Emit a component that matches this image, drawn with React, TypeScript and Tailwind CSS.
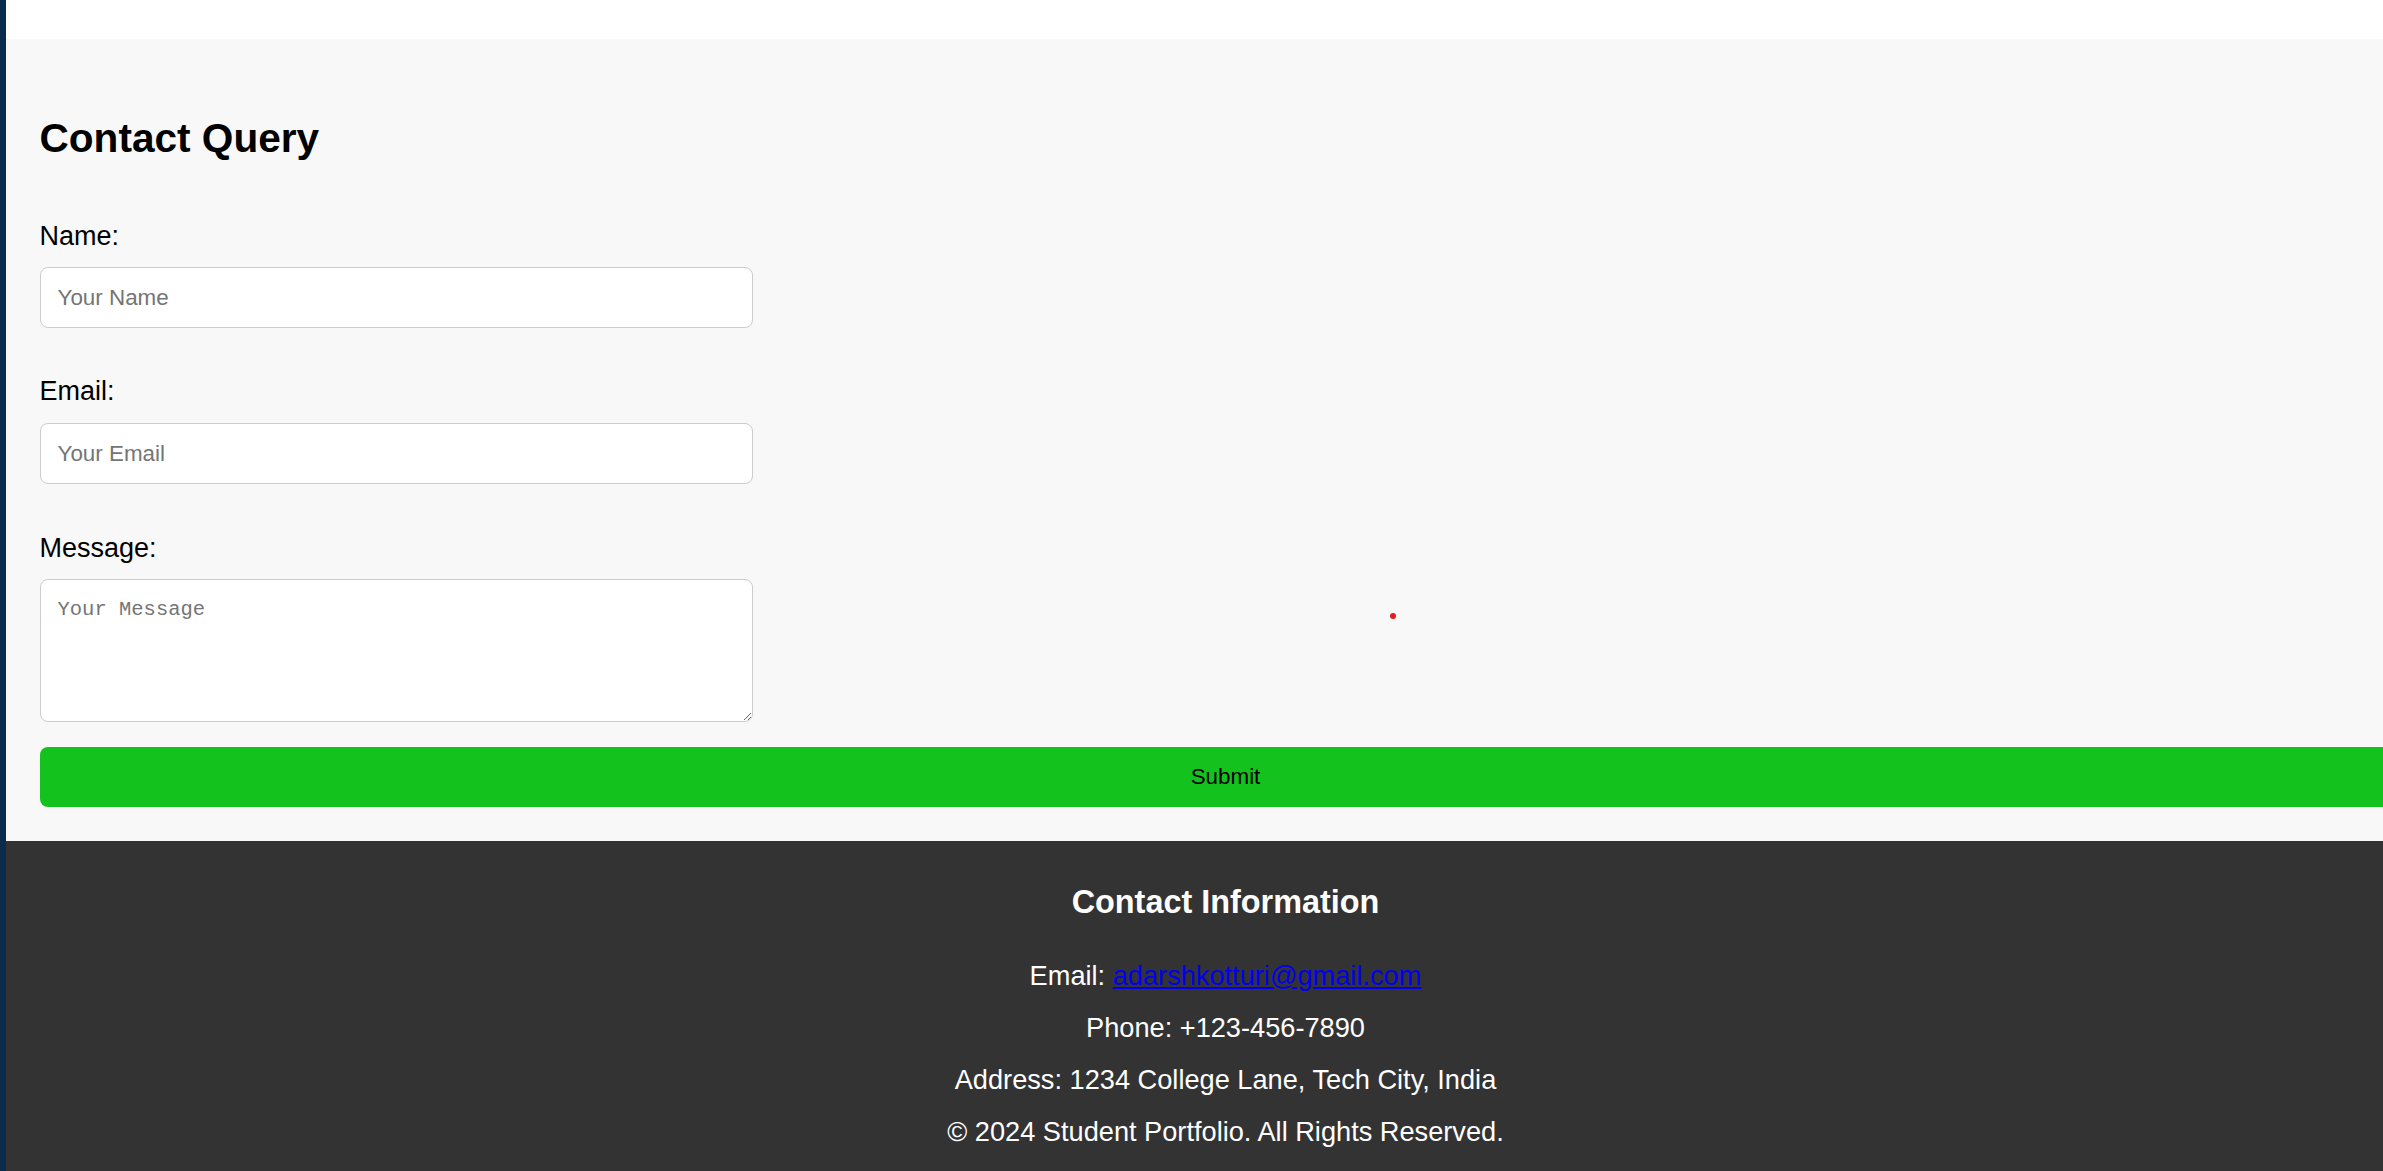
import React from 'react';

const CONTACT_LINES = [
  'Phone: +123-456-7890',
  'Address: 1234 College Lane, Tech City, India',
  '© 2024 Student Portfolio. All Rights Reserved.',
];

export default function App() {
  return (
    <div className="relative flex w-[2383px] h-[1171px] overflow-hidden bg-white font-['Liberation_Sans',Arial,sans-serif] text-black">
      {/* thin navy edge on the left */}
      <div className="w-[6px] shrink-0 bg-[#0b2b4b]" />

      <div className="flex w-[2439px] shrink-0 flex-col">
        <div className="h-[39px] bg-white" />

        <section className="flex flex-col bg-[#f8f8f8] px-[33.5px] pt-[76px] pb-[34px]">
          <h2 className="text-[40.6px] leading-[46px] font-bold">Contact Query</h2>

          <label className="mt-[60px] text-[27px] leading-[31px]">Name:</label>
          <input
            type="text"
            placeholder="Your Name"
            className="mt-[15px] box-border h-[61px] w-[713px] rounded-[8px] border border-[#cccccc] bg-white px-[17px] text-[22.4px] outline-none placeholder:text-[#757575]"
          />

          <label className="mt-[48px] text-[27px] leading-[31px]">Email:</label>
          <input
            type="email"
            placeholder="Your Email"
            className="mt-[16px] box-border h-[61px] w-[713px] rounded-[8px] border border-[#cccccc] bg-white px-[17px] text-[22.4px] outline-none placeholder:text-[#757575]"
          />

          <label className="mt-[49px] text-[27px] leading-[31px]">Message:</label>
          <textarea
            placeholder="Your Message"
            className="mt-[15px] box-border h-[143px] w-[713px] rounded-[8px] border border-[#cccccc] bg-white px-[17px] pt-[17px] font-['Liberation_Mono','DejaVu_Sans_Mono',monospace] text-[20.5px] leading-[26px] outline-none placeholder:text-[#757575]"
          />

          <button className="mt-[25px] h-[60px] w-full rounded-[8px] bg-[#14c21e] text-[22.4px] text-black">
            Submit
          </button>
        </section>

        <footer className="flex flex-1 flex-col items-center bg-[#333333] pt-[43px] text-white">
          <h3 className="text-[32.4px] leading-[36px] font-bold">Contact Information</h3>
          <div className="mt-[40px] flex flex-col items-center gap-[21px] text-[27.2px] leading-[31px]">
            <p>
              Email:{' '}
              <a href="#" className="text-[#0000ee] underline">
                adarshkotturi@gmail.com
              </a>
            </p>
            {CONTACT_LINES.map((line) => (
              <p key={line}>{line}</p>
            ))}
          </div>
        </footer>
      </div>

      {/* stray red dot over the form area */}
      <span className="absolute left-[1390px] top-[613px] h-[6px] w-[6px] rounded-full bg-[#e51c1c]" />
    </div>
  );
}
